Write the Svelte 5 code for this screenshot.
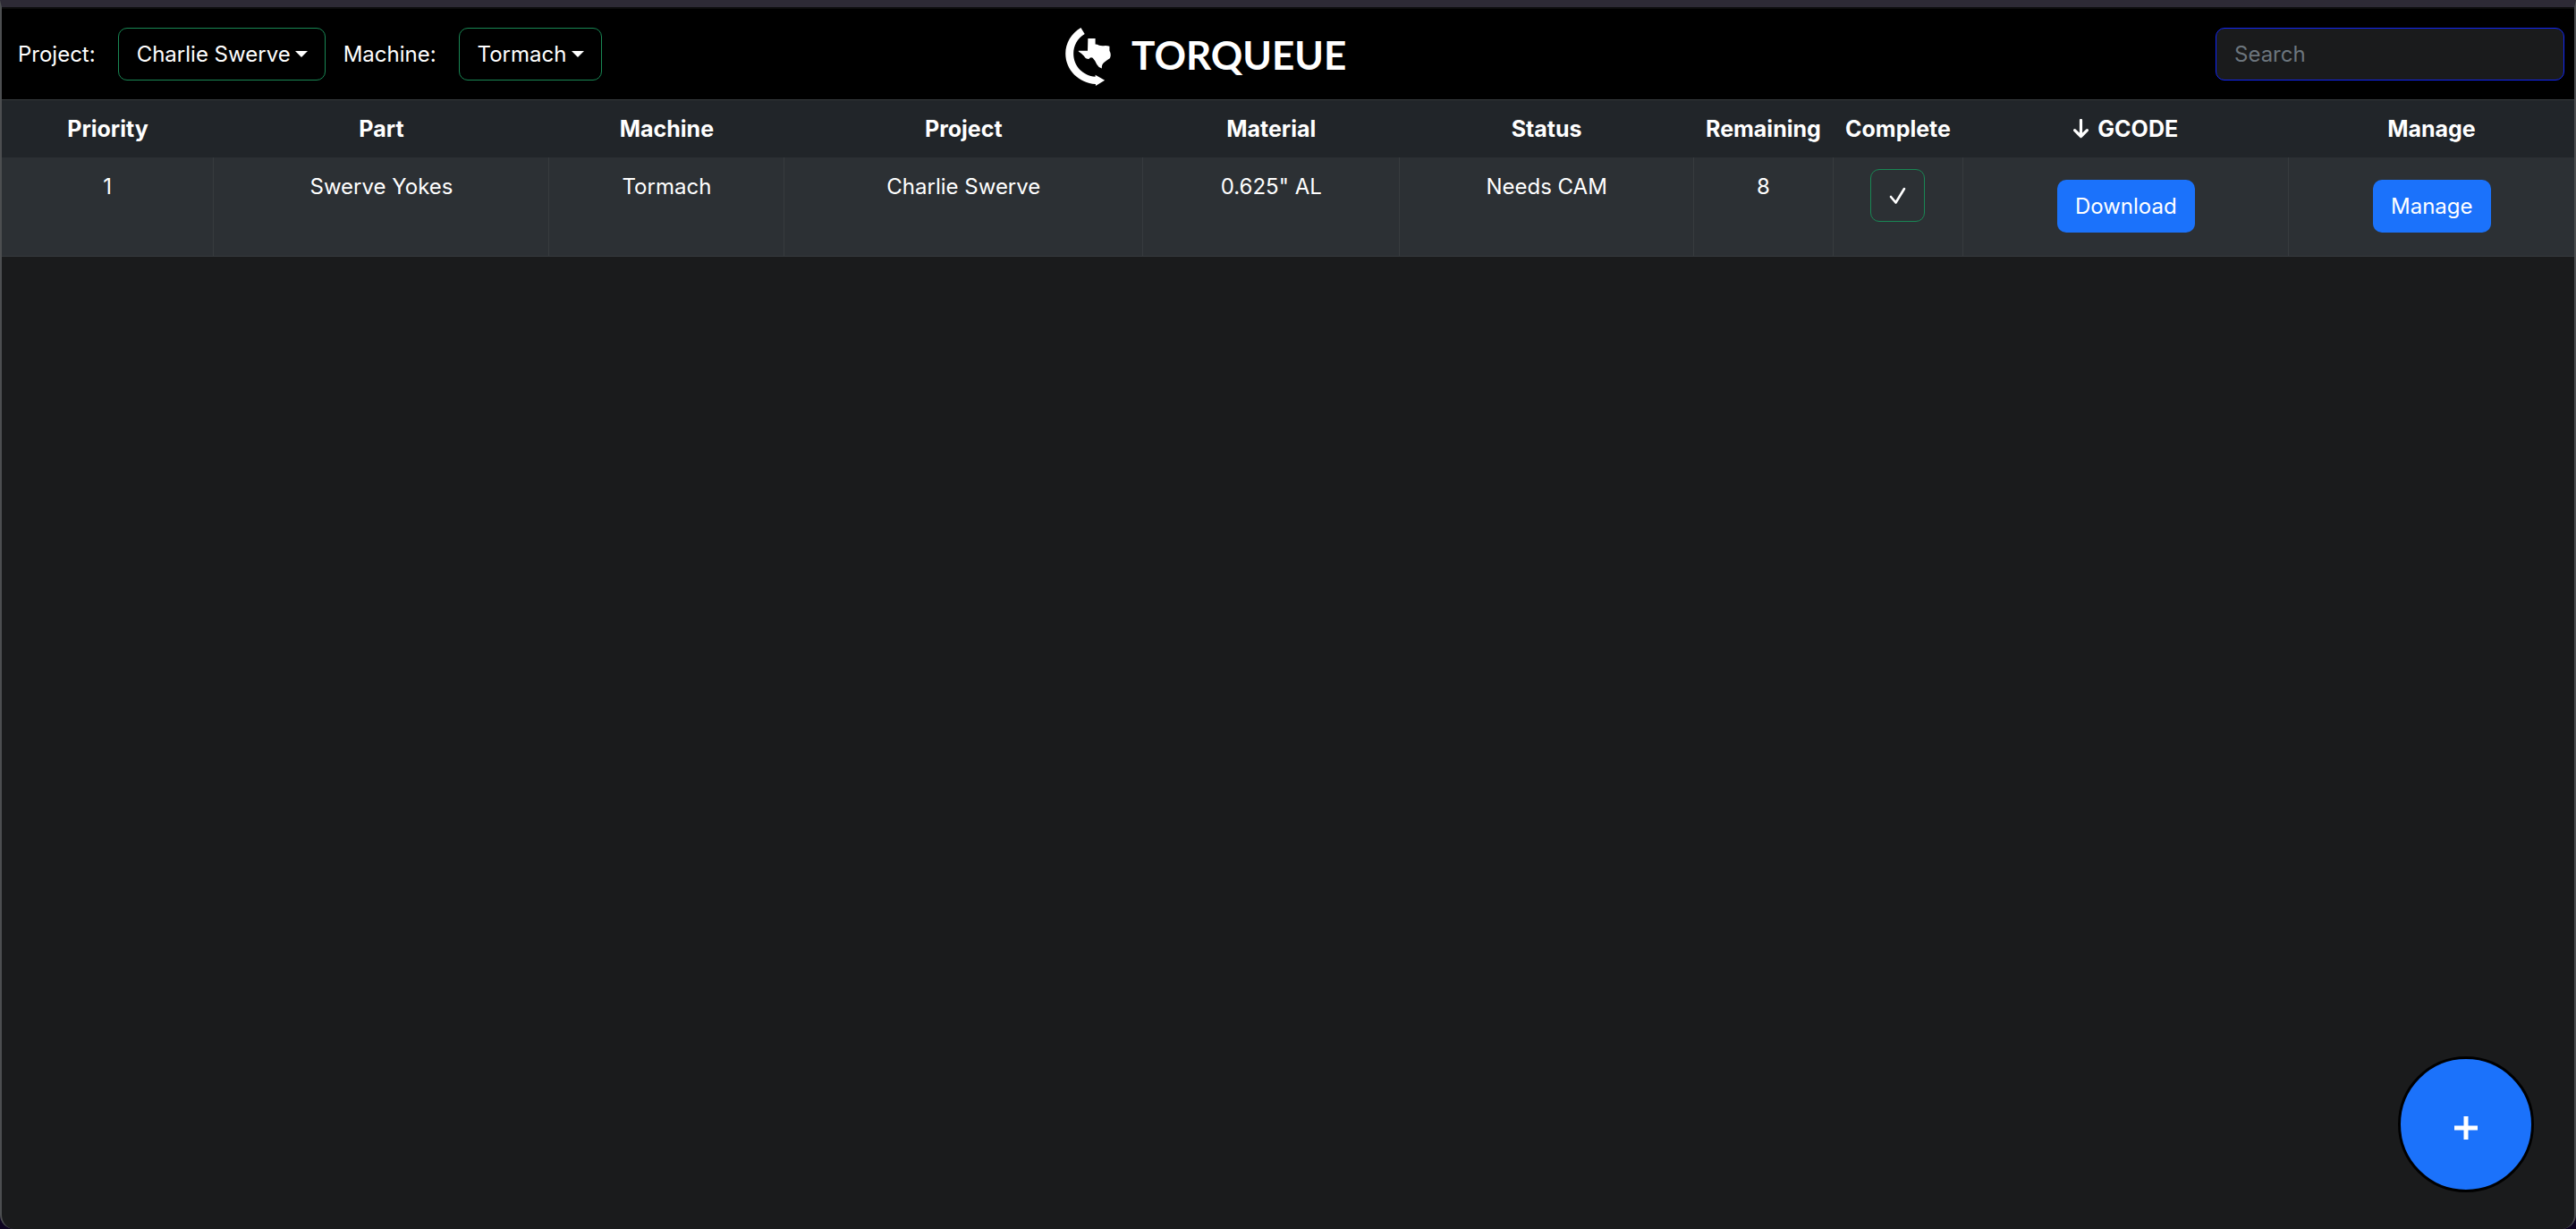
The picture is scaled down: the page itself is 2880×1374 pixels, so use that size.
<script>
  let project = $state('Charlie Swerve');
  let machine = $state('Tormach');
  let query = $state('');

  const columns = [
    { name: 'Priority', share: 8.24 },
    { name: 'Part', share: 13.04 },
    { name: 'Machine', share: 9.14 },
    { name: 'Project', share: 13.94 },
    { name: 'Material', share: 9.98 },
    { name: 'Status', share: 11.43 },
    { name: 'Remaining', share: 5.42 },
    { name: 'Complete', share: 5.05 },
    { name: 'GCODE', share: 12.67, arrow: true },
    { name: 'Manage', share: 11.09 }
  ];

  const parts = [
    {
      priority: 1,
      name: 'Swerve Yokes',
      machine: 'Tormach',
      project: 'Charlie Swerve',
      material: '0.625" AL',
      status: 'Needs CAM',
      remaining: 8
    }
  ];
</script>

<div class="window">
  <header class="bar">
    <div class="filters">
      <label for="project">Project:</label>
      <div class="pick">
        <select id="project" bind:value={project}>
          <option>Charlie Swerve</option>
        </select>
        <svg class="caret" viewBox="0 0 14 7" aria-hidden="true"><path d="M0 0H14L7 7Z" fill="currentColor" /></svg>
      </div>
      <label for="machine">Machine:</label>
      <div class="pick">
        <select id="machine" bind:value={machine}>
          <option>Tormach</option>
        </select>
        <svg class="caret" viewBox="0 0 14 7" aria-hidden="true"><path d="M0 0H14L7 7Z" fill="currentColor" /></svg>
      </div>
    </div>

    <a class="brand" href="/">
      <svg class="mark" viewBox="0 0 156 200" aria-hidden="true">
        <path
          fill="currentColor"
          d="M52 0L65 21C40 36 27 61 27 88C27 130 59 163 101 166V160L133 178L102 197V191C45 188 0 143 0 88C0 51 20 19 52 0Z"
        />
        <path
          fill="currentColor"
          d="M76 36H101V56Q108 56 114 60Q122 62 130 61Q140 60 149 63V78Q154 86 153 93Q152 101 150 104Q140 110 130 118Q122 124 123 138Q112 135 106 124Q100 110 92 102Q84 98 79 106Q68 106 63 96Q56 88 44 80V78H75Z"
        />
      </svg>
      <span class="wordmark">TORQUEUE</span>
    </a>

    <form class="find" role="search">
      <input type="search" placeholder="Search" aria-label="Search" bind:value={query} />
    </form>
  </header>

  <main>
    <table>
      <colgroup>
        {#each columns as column}
          <col style:width="{column.share}%" />
        {/each}
      </colgroup>
      <thead>
        <tr>
          {#each columns as column}
            <th scope="col">
              {#if column.arrow}
                <svg class="arrow" viewBox="0 0 16 20" aria-hidden="true">
                  <path d="M8 1V18M1.500 11.500L8 18L14.500 11.500" fill="none" stroke="currentColor" stroke-width="3" stroke-linecap="round" stroke-linejoin="round" />
                </svg>
              {/if}
              {column.name}
            </th>
          {/each}
        </tr>
      </thead>
      <tbody>
        {#each parts as part}
          <tr>
            <td>{part.priority}</td>
            <td>{part.name}</td>
            <td>{part.machine}</td>
            <td>{part.project}</td>
            <td>{part.material}</td>
            <td>{part.status}</td>
            <td>{part.remaining}</td>
            <td class="tight">
              <button class="done" type="button" aria-label="Mark complete">
                <svg class="tick" viewBox="0 0 20 20" aria-hidden="true">
                  <path d="M2 11L7.500 17.500L17 2" fill="none" stroke="currentColor" stroke-width="2.600" stroke-linecap="round" stroke-linejoin="round" />
                </svg>
              </button>
            </td>
            <td class="roomy"><button class="solid" type="button">Download</button></td>
            <td class="roomy"><button class="solid" type="button">Manage</button></td>
          </tr>
        {/each}
      </tbody>
    </table>
  </main>

  <button class="add" type="button" aria-label="Add part">
    <svg class="plus" viewBox="0 0 26 26" aria-hidden="true">
      <path d="M13 0V26M0 13H26" stroke="currentColor" stroke-width="5" />
    </svg>
  </button>
</div>

<style>
  :global(body) {
    margin: 0;
    background: #0d0420;
  }

  .window,
  .window * {
    box-sizing: border-box;
  }

  .window {
    min-height: 100vh;
    border: 2px solid #4c4e50;
    border-top: 8px solid #2d2a35;
    border-bottom: 0;
    border-radius: 0 0 16px 16px;
    background: #1a1b1c;
    color: #fff;
    font: 400 24px/38px Inter, sans-serif;
  }

  .bar {
    display: grid;
    grid-template-columns: 43fr auto 50fr;
    align-items: center;
    height: 103px;
    padding: 0 11px 0 18px;
    border-top: 2px solid #0c0c0c;
    background: #000;
  }

  .filters {
    display: flex;
    align-items: center;
  }

  .filters label {
    margin-right: 25px;
  }

  .pick {
    display: grid;
    align-items: center;
    margin-right: 20px;
  }

  .pick select,
  .caret {
    grid-area: 1 / 1;
  }

  .pick select {
    appearance: none;
    height: 59px;
    padding: 0 38px 0 20px;
    border: 1px solid #198754;
    border-radius: 10px;
    background: transparent;
    color: inherit;
    font: inherit;
  }

  .caret {
    justify-self: end;
    width: 14px;
    height: 7px;
    margin-right: 20px;
    pointer-events: none;
  }

  .brand {
    display: flex;
    align-items: center;
    gap: 22px;
    color: inherit;
    text-decoration: none;
  }

  .mark {
    width: 52px;
    height: 66px;
    margin-top: 6px;
  }

  .wordmark {
    font: 700 44px/60px Lato, sans-serif;
  }

  .find {
    justify-self: end;
  }

  .find input {
    width: 390px;
    height: 59px;
    padding: 0 20px;
    border: 1px solid #1226f5;
    border-radius: 10px;
    background: #1a1b1c;
    color: inherit;
    font: inherit;
  }

  .find input::placeholder {
    color: #6c757d;
    opacity: 1;
  }

  table {
    width: 100%;
    border-collapse: collapse;
    table-layout: fixed;
    border-top: 1px solid #373b3e;
    border-bottom: 1px solid #373b3e;
    text-align: center;
  }

  th {
    padding: 13px 0;
    background: #212529;
    font-size: 25px;
    font-weight: 700;
    white-space: nowrap;
  }

  td {
    height: 110px;
    padding: 14px 0 12px;
    background: #2c3034;
    vertical-align: top;
  }

  td + td {
    border-left: 1px solid #373b3e;
  }

  td.tight {
    padding-top: 13px;
  }

  td.roomy {
    padding-top: 25px;
  }

  .arrow {
    width: 17px;
    height: 22px;
    margin-right: 4px;
    vertical-align: -2px;
  }

  td button {
    height: 59px;
    border-radius: 10px;
    color: inherit;
    font: inherit;
  }

  .done {
    display: grid;
    place-items: center;
    width: 61px;
    margin: 0 auto;
    padding: 0;
    border: 1px solid #198754;
    background: transparent;
  }

  .tick {
    width: 20px;
    height: 20px;
  }

  .solid {
    padding: 1px 20px 0;
    border: 0;
    background: #1b72fb;
  }

  .add {
    position: fixed;
    right: 47px;
    bottom: 41px;
    display: grid;
    place-items: center;
    width: 152px;
    height: 152px;
    padding: 8px 0 0;
    border: 3px solid #000;
    border-radius: 50%;
    background: #1b72fb;
    color: #fff;
  }

  .plus {
    width: 26px;
    height: 26px;
  }
</style>
